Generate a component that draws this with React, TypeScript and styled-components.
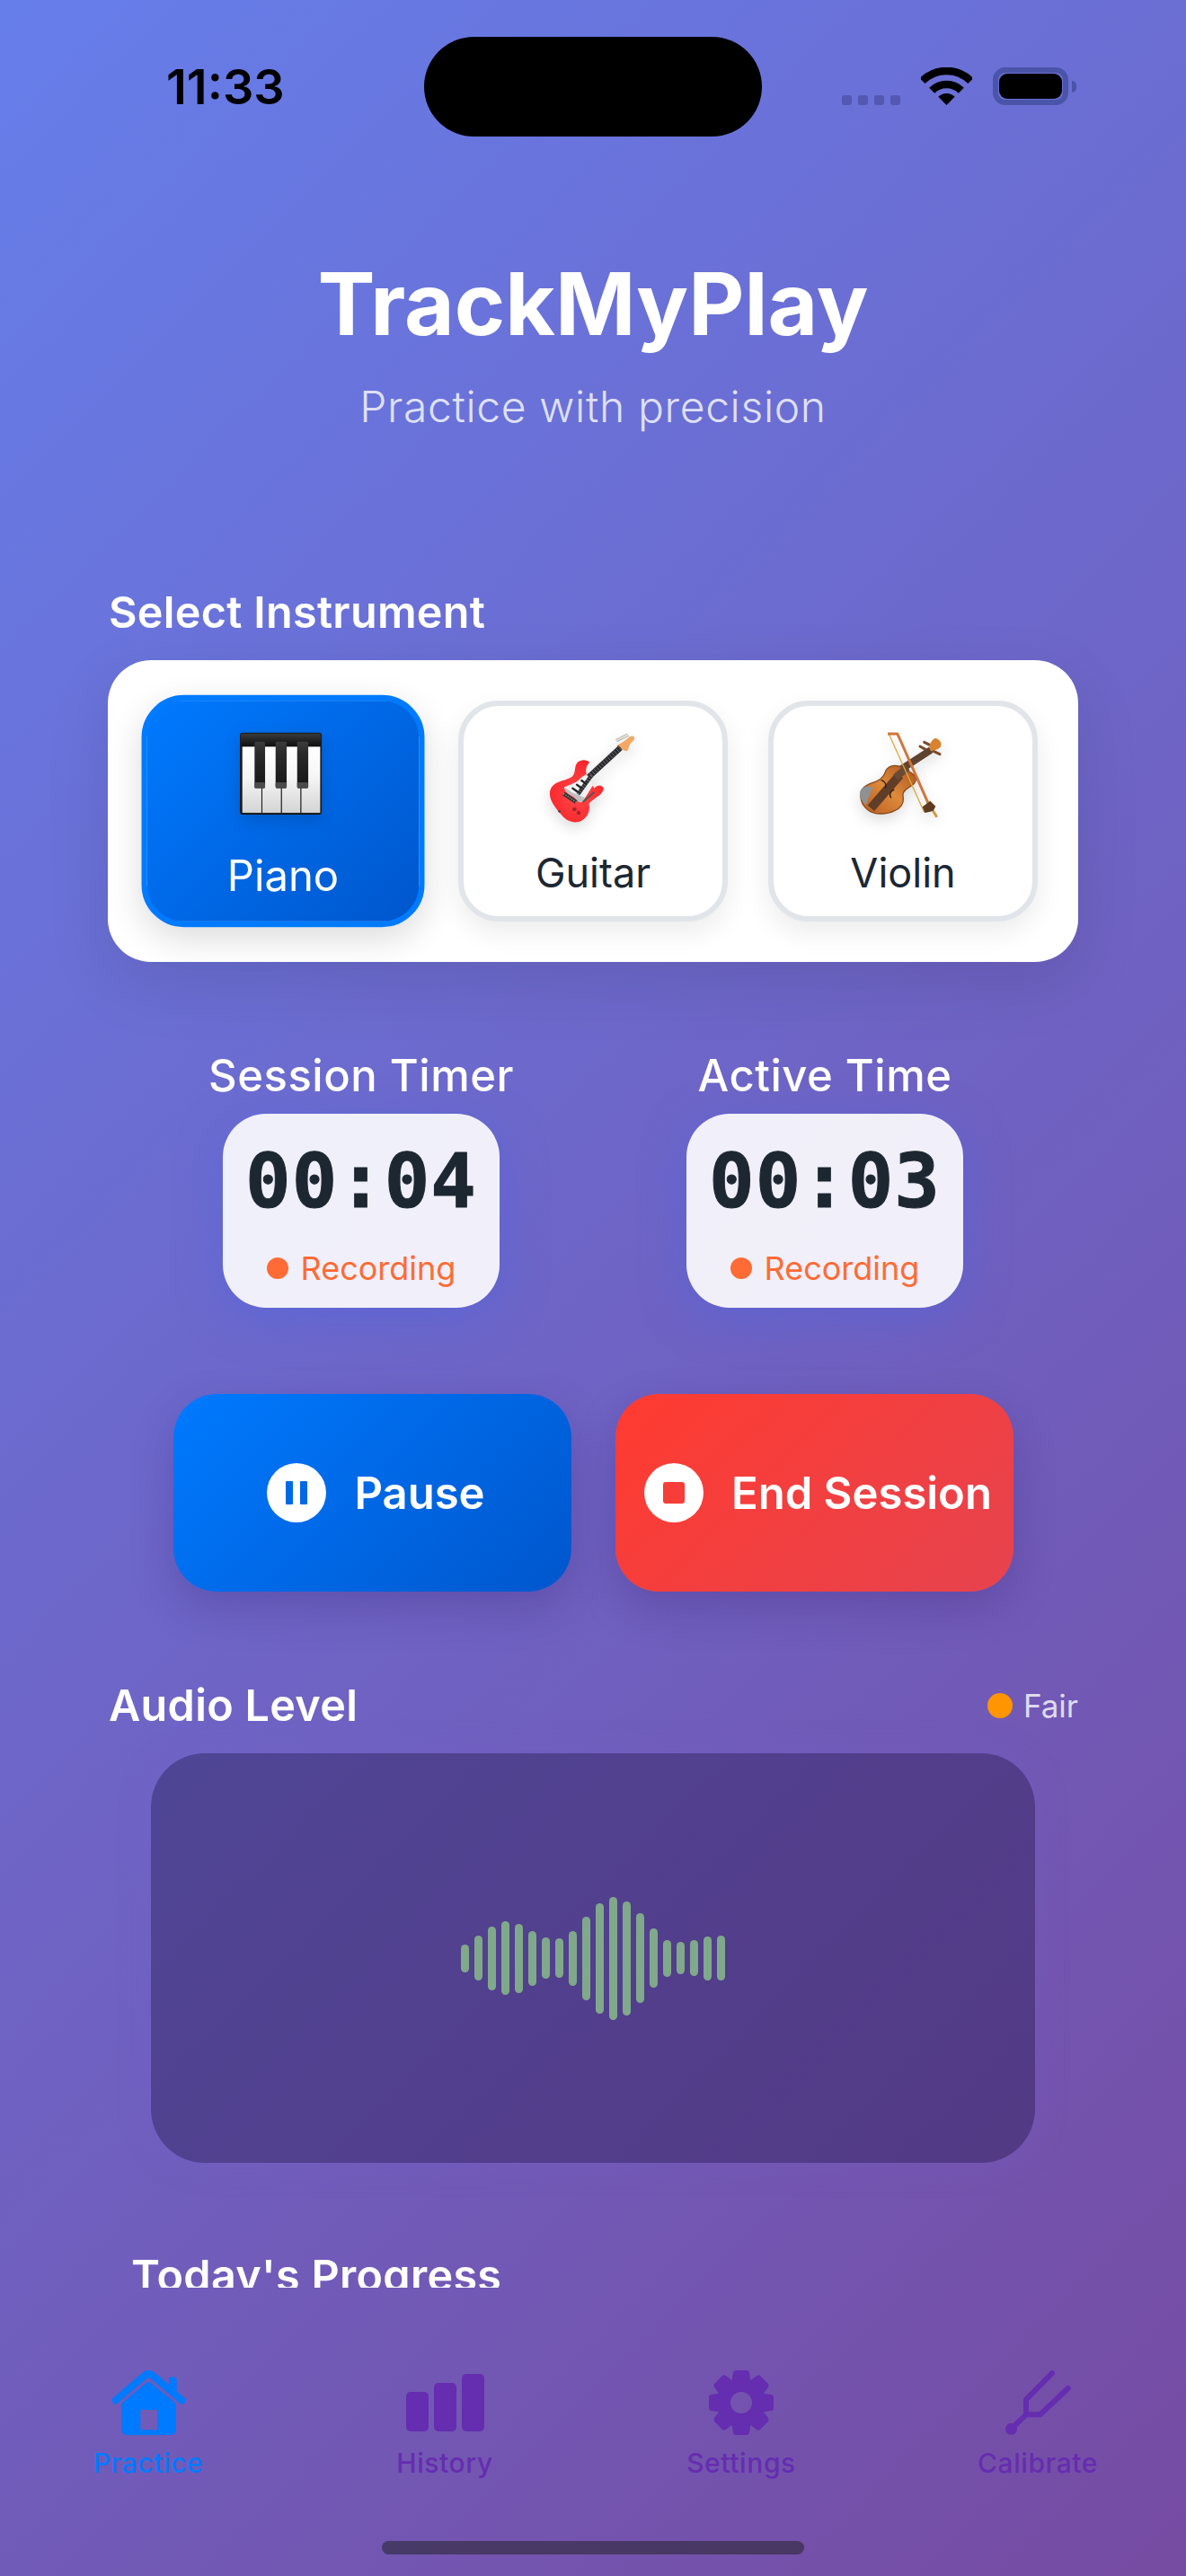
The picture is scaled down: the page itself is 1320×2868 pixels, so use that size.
import styled, { createGlobalStyle } from 'styled-components';

const GlobalStyle = createGlobalStyle`
  html, body {
    margin: 0;
    padding: 0;
  }

  body {
    font-family: Inter, "Noto Sans", sans-serif;
  }

  * {
    box-sizing: border-box;
  }
`;

const Page = styled.div`
  width: 1320px;
  height: 2868px;
  display: flex;
  flex-direction: column;
  overflow: hidden;
  background: linear-gradient(135deg, #667eea 0%, #764ba2 100%);
`;

/* status bar */

const StatusBar = styled.div`
  flex: none;
  height: 162px;
  padding-top: 41px;
  display: grid;
  grid-template-columns: 472px 376px 1fr;
  align-items: start;
`;

const Clock = styled.div`
  height: 111px;
  padding-left: 185px;
  display: flex;
  align-items: center;
  font-size: 54px;
  font-weight: 600;
  color: #000;
`;

const Island = styled.div`
  height: 111px;
  border-radius: 56px;
  background: #000;
`;

const StatusIcons = styled.div`
  height: 76px;
  padding-left: 89px;
  display: flex;
  align-items: flex-end;
  gap: 23px;
`;

const SignalDots = styled.div`
  display: flex;
  gap: 7px;
`;

const SignalDot = styled.span`
  width: 11px;
  height: 11px;
  border-radius: 3px;
  background: rgba(30, 30, 90, 0.3);
`;

const Battery = styled.div`
  position: relative;
  width: 84px;
  height: 42px;
  padding: 1px;
  border: 6px solid #4a54a8;
  border-radius: 14px;
`;

const BatteryFill = styled.div`
  height: 100%;
  border-radius: 9px;
  background: #000;
`;

const BatteryCap = styled.span`
  position: absolute;
  top: 9px;
  right: -15px;
  width: 5px;
  height: 13px;
  border-radius: 0 5px 5px 0;
  background: #4a54a8;
`;

/* scrolling content */

const Scroll = styled.main`
  flex: 1;
  min-height: 0;
  overflow: hidden;
  padding: 0 120px;
`;

const Header = styled.header`
  padding-top: 118px;
  text-align: center;
`;

const Title = styled.h1`
  margin: 0;
  font-size: 96px;
  line-height: 116px;
  font-weight: 700;
  color: #fff;
`;

const Subtitle = styled.p`
  margin: 28px 0 0;
  font-size: 48px;
  line-height: 58px;
  font-weight: 300;
  letter-spacing: 0.65px;
  color: rgba(255, 255, 255, 0.8);
`;

const SectionLabel = styled.h2<{ $indent?: number }>`
  margin: 0;
  padding-left: ${({ $indent }) => $indent ?? 1}px;
  font-size: 48.5px;
  line-height: 58px;
  font-weight: 600;
  letter-spacing: 0.3px;
  color: #fff;
`;

const InstrumentSection = styled.section`
  margin-top: 171px;
`;

const InstrumentCard = styled.div`
  margin-top: 24px;
  height: 336px;
  padding: 45px;
  display: flex;
  gap: 45px;
  border-radius: 48px;
  background: #fff;
  box-shadow: 0 24px 72px rgba(0, 0, 0, 0.1);
`;

const InstrumentButton = styled.button<{ $active?: boolean }>`
  flex: 1;
  min-width: 0;
  padding: 13px 0 0;
  display: flex;
  flex-direction: column;
  align-items: center;
  gap: 26px;
  font-family: inherit;
  border: 6px solid ${({ $active }) => ($active ? '#007aff' : '#e1e5ea')};
  border-radius: 45px;
  color: ${({ $active }) => ($active ? '#fff' : '#1c2733')};
  background: ${({ $active }) =>
    $active ? 'linear-gradient(135deg, #007aff 0%, #0056cc 100%)' : '#fff'};
  box-shadow: ${({ $active }) =>
    $active ? '0 12px 36px rgba(0, 0, 0, 0.14)' : '0 12px 30px rgba(0, 0, 0, 0.08)'};
  transform: ${({ $active }) => ($active ? 'scale(1.05)' : 'none')};
`;

const InstrumentName = styled.span`
  font-size: 45px;
  line-height: 54px;
  font-weight: 400;
`;

const EmojiArt = styled.svg`
  flex: none;
  display: block;
  filter: drop-shadow(0 6px 8px rgba(0, 0, 0, 0.14));
`;

const Timers = styled.section`
  margin-top: 98px;
  padding: 0 24px;
  display: grid;
  grid-template-columns: 1fr 1fr;
`;

const TimerColumn = styled.div`
  display: flex;
  flex-direction: column;
  align-items: center;
  gap: 13px;
`;

const TimerTitle = styled.div`
  font-size: 49px;
  line-height: 58px;
  font-weight: 500;
  letter-spacing: 0.5px;
  color: #fff;
`;

const TimerCard = styled.div`
  width: 308px;
  height: 216px;
  padding-top: 26px;
  display: flex;
  flex-direction: column;
  align-items: center;
  border-radius: 48px;
  background: rgba(255, 255, 255, 0.9);
  box-shadow: 0 12px 48px rgba(80, 100, 220, 0.55);
`;

const TimerValue = styled.div`
  font-family: "DejaVu Sans Mono", "Liberation Mono", monospace;
  font-size: 84px;
  line-height: 98px;
  font-weight: 700;
  letter-spacing: 1px;
  -webkit-text-stroke: 1px #1c2731;
  color: #1c2731;
`;

const RecordingRow = styled.div`
  margin-top: 26px;
  display: flex;
  align-items: center;
  gap: 14px;
  font-size: 36px;
  line-height: 44px;
  color: #ff6b35;
`;

const Dot = styled.span<{ $color: string; $size: number }>`
  flex: none;
  width: ${({ $size }) => $size}px;
  height: ${({ $size }) => $size}px;
  border-radius: 50%;
  background: ${({ $color }) => $color};
`;

const Actions = styled.section`
  margin-top: 96px;
  padding: 0 72px 0 73px;
  display: flex;
  gap: 49px;
`;

const ActionButton = styled.button<{ $tone: 'blue' | 'red' }>`
  flex: 1;
  height: 220px;
  padding: 0 0 0 8px;
  display: flex;
  align-items: center;
  justify-content: center;
  gap: 31px;
  border: 0;
  border-radius: 48px;
  font-family: inherit;
  font-size: 49px;
  font-weight: 600;
  color: #fff;
  background: ${({ $tone }) =>
    $tone === 'blue'
      ? 'linear-gradient(135deg, #007aff 0%, #0056cc 100%)'
      : 'linear-gradient(135deg, #ff3b30 0%, #e6434f 100%)'};
  box-shadow: 0 18px 48px rgba(40, 20, 90, 0.22);
`;

const ActionIcon = styled.span<{ $tone: 'blue' | 'red' }>`
  flex: none;
  width: 66px;
  height: 66px;
  display: flex;
  align-items: center;
  justify-content: center;
  border-radius: 50%;
  background: #fff;
  color: ${({ $tone }) => ($tone === 'blue' ? '#0069e6' : '#f63d38')};
`;

const AudioHeader = styled.div`
  margin-top: 98px;
  display: flex;
  align-items: center;
  justify-content: space-between;
`;

const QualityBadge = styled.div`
  display: flex;
  align-items: center;
  gap: 12px;
  font-size: 35px;
  line-height: 44px;
  color: rgba(255, 255, 255, 0.8);
`;

const AudioPanel = styled.div`
  margin: 24px 48px 0;
  height: 456px;
  display: flex;
  align-items: center;
  justify-content: center;
  gap: 6px;
  border-radius: 60px;
  background: rgba(10, 0, 40, 0.3);
  box-shadow: 0 0 36px rgba(120, 100, 200, 0.25);
`;

const WaveBar = styled.span`
  width: 9px;
  border-radius: 5px;
  background: #80a88a;
`;

const ProgressLabel = styled(SectionLabel)`
  margin-top: 97px;
`;

/* tab bar */

const TabBar = styled.nav`
  flex: none;
  height: 321px;
  padding-top: 92px;
  display: flex;
  flex-direction: column;
  align-items: center;
`;

const Tabs = styled.div`
  align-self: stretch;
  display: grid;
  grid-template-columns: repeat(4, 1fr);
`;

const Tab = styled.div<{ $active?: boolean }>`
  display: flex;
  flex-direction: column;
  align-items: center;
  color: ${({ $active }) => ($active ? '#007aff' : '#652db0')};
`;

const TabIcon = styled.div`
  height: 72px;
  display: flex;
  align-items: center;
  justify-content: center;

  svg {
    display: block;
  }
`;

const TabLabel = styled.span`
  margin-top: 13px;
  font-size: 30px;
  line-height: 36px;
  font-weight: 500;
  letter-spacing: 0.6px;
`;

const HomeIndicator = styled.div`
  margin-top: 69px;
  width: 470px;
  height: 15px;
  border-radius: 8px;
  background: rgba(30, 30, 30, 0.5);
`;

const waveHeights = [31, 50, 71, 82, 77, 61, 46, 44, 61, 93, 123, 137, 127, 100, 66, 41, 36, 40, 49, 50];

function WifiIcon() {
  return (
    <svg width="57" height="42" viewBox="0 0 57 42" fill="none">
      <path d="M1.6 15.1A38 38 0 0 1 55.4 15.1" stroke="#000" strokeWidth="8.5" />
      <path d="M12.2 25.7A23 23 0 0 1 44.8 25.7" stroke="#000" strokeWidth="8.5" />
      <path d="M28.5 42 19.3 32.8A13 13 0 0 1 37.7 32.8Z" fill="#000" />
    </svg>
  );
}

function PianoEmoji() {
  return (
    <EmojiArt width="160" height="120" viewBox="0 0 160 120">
      <defs>
        <linearGradient id="pianoWhite" x1="0" y1="0" x2="0" y2="1">
          <stop offset="0" stopColor="#fff" />
          <stop offset="0.45" stopColor="#f6f6f6" />
          <stop offset="1" stopColor="#d4d4d4" />
        </linearGradient>
        <linearGradient id="pianoBlack" x1="0" y1="0" x2="0" y2="1">
          <stop offset="0" stopColor="#3c3c3c" />
          <stop offset="0.25" stopColor="#2a2a2a" />
          <stop offset="1" stopColor="#161616" />
        </linearGradient>
        <linearGradient id="pianoTop" x1="0" y1="0" x2="0" y2="1">
          <stop offset="0" stopColor="#3a3a3a" />
          <stop offset="1" stopColor="#0f0f0f" />
        </linearGradient>
      </defs>
      <g transform="translate(34.3 21) scale(0.953)">
        <rect width="91" height="91" rx="3" fill="#1a1a1a" />
        <rect x="1" y="1" width="89" height="14" rx="2" fill="url(#pianoTop)" />
        <rect x="2.7" y="15.5" width="21.2" height="73.5" fill="url(#pianoWhite)" />
        <rect x="25" y="15.5" width="20.6" height="73.5" fill="url(#pianoWhite)" />
        <rect x="46.8" y="15.5" width="20.4" height="73.5" fill="url(#pianoWhite)" />
        <rect x="68.4" y="15.5" width="20.9" height="73.5" fill="url(#pianoWhite)" />
        <rect x="16.3" y="10" width="11.7" height="51.5" rx="1.5" fill="url(#pianoBlack)" />
        <rect x="39.7" y="10" width="12.3" height="51.5" rx="1.5" fill="url(#pianoBlack)" />
        <rect x="63.7" y="10" width="12.3" height="51.5" rx="1.5" fill="url(#pianoBlack)" />
        <rect x="16.3" y="55" width="11.7" height="6.5" rx="1.5" fill="#4a4a4a" />
        <rect x="39.7" y="55" width="12.3" height="6.5" rx="1.5" fill="#4a4a4a" />
        <rect x="63.7" y="55" width="12.3" height="6.5" rx="1.5" fill="#4a4a4a" />
      </g>
    </EmojiArt>
  );
}

function GuitarEmoji() {
  return (
    <EmojiArt width="160" height="120" viewBox="0 0 480 360">
      <defs>
        <radialGradient id="guitarBody" cx="0.5" cy="0.55" r="0.62">
          <stop offset="0" stopColor="#ff4a4a" />
          <stop offset="0.75" stopColor="#fb2b2f" />
          <stop offset="1" stopColor="#e81f26" />
        </radialGradient>
      </defs>
      <path d="M316 74 356 54" stroke="#c9c4bd" strokeWidth="5" />
      <path d="M320 80 360 60" stroke="#b9b4ad" strokeWidth="4" />
      <path
        d="M318 96C326 86 338 84 350 74C358 66 372 56 378 66C380 78 366 82 362 92C358 100 358 112 350 112C340 110 336 100 330 104Z"
        fill="#f4a866"
      />
      <path d="M226 198 332 100" stroke="#29292d" strokeWidth="19" />
      <path d="M226 198 332 100" stroke="#77777c" strokeWidth="15" strokeDasharray="2 8" />
      <path
        d="M228 150C222 140 200 138 188 150C176 162 184 186 170 197C150 212 112 208 98 240C88 268 112 300 135 325C150 345 178 356 200 345C222 333 232 310 226 288C236 272 270 262 276 238C270 222 256 224 244 236L218 190C214 172 218 160 228 150Z"
        fill="url(#guitarBody)"
      />
      <path
        d="M144 232C160 224 188 218 200 200L216 190C224 198 234 214 240 226L206 280C196 288 188 278 180 268C170 258 146 254 144 232Z"
        fill="#f1f1f1"
      />
      <path d="M144 232C146 252 170 258 180 268C188 278 196 288 206 280L214 268 170 250Z" fill="#bfbfc2" />
      <path d="M234 194 190 256" stroke="#29292d" strokeWidth="13" />
      <path d="M234 194 190 256" stroke="#8c8c92" strokeWidth="10" strokeDasharray="2 7" />
      <path d="M172 236 186 246M186 224 200 234M202 210 216 220" stroke="#222" strokeWidth="7" strokeLinecap="round" />
      <path d="M142 254 184 282" stroke="#333" strokeWidth="13" />
      <path d="M142 254 184 282" stroke="#aaa" strokeWidth="5" strokeDasharray="3 5" />
      <path d="M206 282 244 248" stroke="#555" strokeWidth="6" />
      <circle cx="178" cy="306" r="7" fill="#a8242a" />
      <circle cx="192" cy="318" r="7" fill="#a8242a" />
      <circle cx="128" cy="313" r="4" fill="#444" />
    </EmojiArt>
  );
}

function ViolinEmoji() {
  return (
    <EmojiArt width="160" height="120" viewBox="-15 0 480 360">
      <defs>
        <linearGradient id="violinBody" x1="0" y1="1" x2="1" y2="0">
          <stop offset="0" stopColor="#b9591f" />
          <stop offset="0.5" stopColor="#dd8a3a" />
          <stop offset="1" stopColor="#a9531f" />
        </linearGradient>
      </defs>
      <path d="M282 96 300 106M296 82 316 92M322 110 348 122" stroke="#7a4a2a" strokeWidth="9" strokeLinecap="round" />
      <path d="M210 178 318 108" stroke="#5f432f" strokeWidth="24" />
      <path
        d="M312 96C316 84 322 74 332 68C346 70 358 84 350 98C342 108 328 108 318 112Z"
        fill="#d8832f"
      />
      <path
        d="M168 176C182 156 208 156 226 170C240 180 264 184 268 202C270 222 250 228 240 236C228 244 222 256 226 268C228 286 216 304 198 310C170 324 130 326 108 308C86 292 78 264 88 240C100 222 126 218 138 212C156 204 164 192 168 176Z"
        fill="url(#violinBody)"
        stroke="#8c4a20"
        strokeWidth="4"
      />
      <path d="M118 302 214 192" stroke="#5f3d28" strokeWidth="30" />
      <path d="M200 200 240 166" stroke="#6b4a35" strokeWidth="24" />
      <path
        d="M82 246C88 232 108 226 124 232C118 252 106 276 102 292C90 284 78 266 82 246Z"
        fill="#8f9194"
      />
      <path d="M152 208C164 212 172 224 166 236M196 240C184 244 176 258 186 268" stroke="#2e1c10" strokeWidth="4" fill="none" />
      <path d="M178 55 296 316" stroke="#d8aa3e" strokeWidth="4" />
      <path d="M174 54H206L212 66 312 292" stroke="#d0763a" strokeWidth="9" fill="none" strokeLinejoin="round" />
      <path d="M290 298 316 278 334 296 326 312 298 318Z" fill="#5f3a22" />
      <path d="M326 312 338 332" stroke="#d39a3c" strokeWidth="9" />
    </EmojiArt>
  );
}

function HomeIcon() {
  return (
    <svg width="81" height="72" viewBox="0 0 81 72" fill="currentColor">
      <path d="M3.5 33.5 36.6 5.4a6 6 0 0 1 7.7 0L77.5 33.5" fill="none" stroke="currentColor" strokeWidth="8" strokeLinecap="round" strokeLinejoin="round" />
      <path d="M63 26V10a2.5 2.5 0 0 1 2.5-2.5h3.7a2.5 2.5 0 0 1 2.5 2.5v23Z" />
      <path
        fillRule="evenodd"
        d="M38.5 13.6a3 3 0 0 1 3.7 0L71 37v29a6 6 0 0 1-6 6H16a6 6 0 0 1-6-6V37ZM31.3 44V66.3H50V44Z"
      />
    </svg>
  );
}

function HistoryIcon() {
  return (
    <svg width="87" height="64" viewBox="0 0 87 64" fill="currentColor">
      <rect x="0" y="20" width="25" height="44" rx="5" />
      <rect x="31" y="10" width="25" height="54" rx="5" />
      <rect x="62" y="0" width="25" height="64" rx="5" />
    </svg>
  );
}

function GearIcon() {
  const teeth = [0, 45, 90, 135, 180, 225, 270, 315];
  return (
    <svg width="72" height="72" viewBox="0 0 72 72" fill="currentColor">
      {teeth.map((angle) => (
        <path
          key={angle}
          transform={`rotate(${angle} 36 36)`}
          d="M30 0h12a3 3 0 0 1 3 2.5L47 16H25l2-13.5A3 3 0 0 1 30 0Z"
        />
      ))}
      <circle cx="36" cy="36" r="18.5" fill="none" stroke="currentColor" strokeWidth="13" />
    </svg>
  );
}

function TuningForkIcon() {
  return (
    <svg width="73" height="72" viewBox="0 0 73 72" fill="none" stroke="currentColor" strokeWidth="6" strokeLinecap="round" strokeLinejoin="round">
      <path d="M6.3 65.3 23 49.3V32.7L52 3.2" />
      <path d="M23 49.3H38.7L69.7 20" />
      <circle cx="6.5" cy="65.3" r="6.5" fill="currentColor" stroke="none" />
    </svg>
  );
}

export default function App() {
  return (
    <Page>
      <GlobalStyle />
      <StatusBar>
        <Clock>11:33</Clock>
        <Island />
        <StatusIcons>
          <SignalDots>
            <SignalDot />
            <SignalDot />
            <SignalDot />
            <SignalDot />
          </SignalDots>
          <WifiIcon />
          <Battery>
            <BatteryFill />
            <BatteryCap />
          </Battery>
        </StatusIcons>
      </StatusBar>

      <Scroll>
        <Header>
          <Title>TrackMyPlay</Title>
          <Subtitle>Practice with precision</Subtitle>
        </Header>

        <InstrumentSection>
          <SectionLabel>Select Instrument</SectionLabel>
          <InstrumentCard>
            <InstrumentButton $active>
              <PianoEmoji />
              <InstrumentName>Piano</InstrumentName>
            </InstrumentButton>
            <InstrumentButton>
              <GuitarEmoji />
              <InstrumentName>Guitar</InstrumentName>
            </InstrumentButton>
            <InstrumentButton>
              <ViolinEmoji />
              <InstrumentName>Violin</InstrumentName>
            </InstrumentButton>
          </InstrumentCard>
        </InstrumentSection>

        <Timers>
          <TimerColumn>
            <TimerTitle>Session Timer</TimerTitle>
            <TimerCard>
              <TimerValue>00:04</TimerValue>
              <RecordingRow>
                <Dot $color="#ff6b35" $size={24} />
                Recording
              </RecordingRow>
            </TimerCard>
          </TimerColumn>
          <TimerColumn>
            <TimerTitle>Active Time</TimerTitle>
            <TimerCard>
              <TimerValue>00:03</TimerValue>
              <RecordingRow>
                <Dot $color="#ff6b35" $size={24} />
                Recording
              </RecordingRow>
            </TimerCard>
          </TimerColumn>
        </Timers>

        <Actions>
          <ActionButton $tone="blue">
            <ActionIcon $tone="blue">
              <svg width="26" height="26" viewBox="0 0 26 26" fill="currentColor">
                <rect x="1" width="8" height="26" rx="1" />
                <rect x="17" width="8" height="26" rx="1" />
              </svg>
            </ActionIcon>
            Pause
          </ActionButton>
          <ActionButton $tone="red">
            <ActionIcon $tone="red">
              <svg width="24" height="24" viewBox="0 0 24 24" fill="currentColor">
                <rect width="24" height="24" rx="3" />
              </svg>
            </ActionIcon>
            End Session
          </ActionButton>
        </Actions>

        <AudioHeader>
          <SectionLabel>Audio Level</SectionLabel>
          <QualityBadge>
            <Dot $color="#ff9500" $size={28} />
            Fair
          </QualityBadge>
        </AudioHeader>

        <AudioPanel>
          {waveHeights.map((height, index) => (
            <WaveBar key={index} style={{ height }} />
          ))}
        </AudioPanel>

        <ProgressLabel $indent={26}>Today's Progress</ProgressLabel>
      </Scroll>

      <TabBar>
        <Tabs>
          <Tab $active>
            <TabIcon>
              <HomeIcon />
            </TabIcon>
            <TabLabel>Practice</TabLabel>
          </Tab>
          <Tab>
            <TabIcon>
              <HistoryIcon />
            </TabIcon>
            <TabLabel>History</TabLabel>
          </Tab>
          <Tab>
            <TabIcon>
              <GearIcon />
            </TabIcon>
            <TabLabel>Settings</TabLabel>
          </Tab>
          <Tab>
            <TabIcon>
              <TuningForkIcon />
            </TabIcon>
            <TabLabel>Calibrate</TabLabel>
          </Tab>
        </Tabs>
        <HomeIndicator />
      </TabBar>
    </Page>
  );
}
